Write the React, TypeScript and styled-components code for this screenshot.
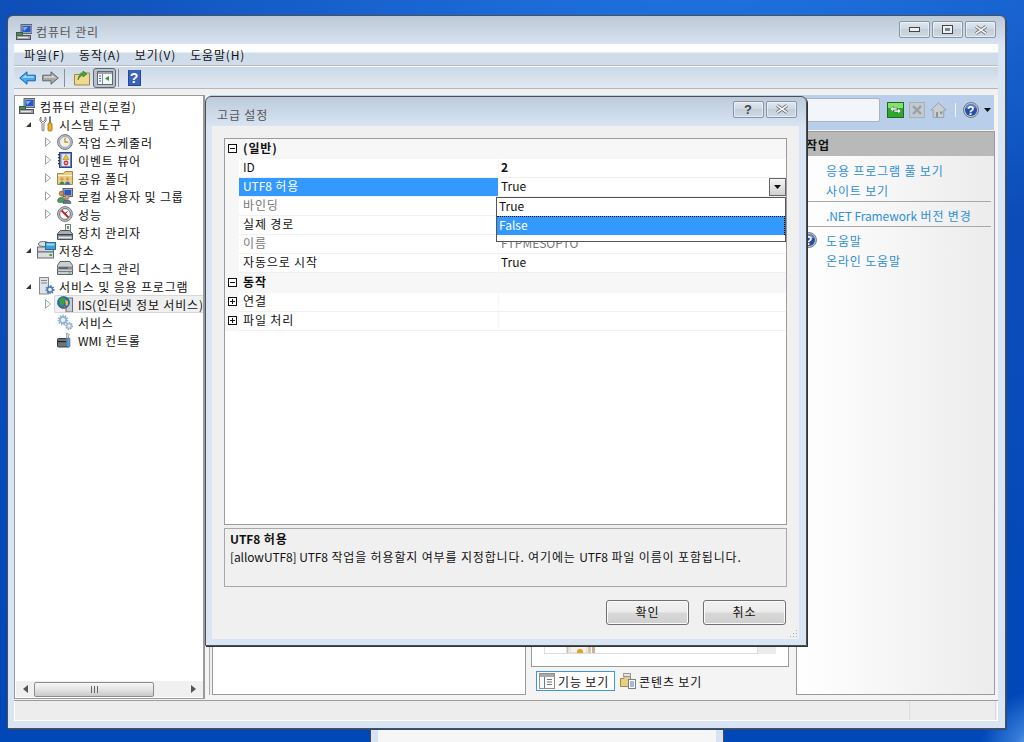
import React from "react";
import styled, { createGlobalStyle } from "styled-components";

const Global = createGlobalStyle`
  html, body { margin: 0; padding: 0; height: 100%; overflow: hidden; }
  body { font-family: "Noto Sans CJK KR", "Liberation Sans", sans-serif; font-size: 12px; color: #111; letter-spacing: .85px; }
  * { box-sizing: border-box; }
`;

const Lat = styled.span`letter-spacing: -.1px;`;

const Desktop = styled.div`
  position: relative; width: 1024px; height: 742px; overflow: hidden;
  background:
    radial-gradient(60px 60px at 1040px 750px, #9fd0f5 0%, rgba(90,160,240,.6) 40%, rgba(0,71,184,0) 100%),
    radial-gradient(700px 300px at 700px -60px, #2278e6 0%, rgba(30,112,224,0) 100%),
    linear-gradient(180deg, #0e4fb8 0%, #0b4cba 40%, #0047b8 100%);
`;
const BackWindow = styled.div`
  position: absolute; left: 370px; top: 727px; width: 354px; height: 20px;
  background: #f6f6f6; border: 1px solid #4a4a4a; border-left-width: 1px;
  box-shadow: inset 7px 0 0 #d7e3f1, inset -7px 0 0 #d7e3f1;
`;
const Win = styled.div`
  position: absolute; left: 7px; top: 15px; width: 999px; height: 714px;
  border: 1px solid #4c5056; border-radius: 6px 6px 0 0;
  background: linear-gradient(180deg, #bcc8d4 0, #d9e5f3 30px, #d9e5f3 100%);
  padding: 0 7px 7px 6px; display: flex; flex-direction: column;
  box-shadow: 1px 1px 0 #2c4a80;
`;
const TitleBar = styled.div`
  height: 28px; flex: none; display: flex; align-items: center; position: relative;
  gap: 4px; padding: 3px 0 0 2px; color: #555; font-size: 12px;
`;
const CaptionGroup = styled.div`
  margin-left: auto; display: flex; gap: 2px; padding-right: 2px; margin-top: -4px;
`;
const CaptionBtn = styled.div<{ $w?: number }>`
  width: ${p => p.$w ?? 31}px; height: 17px; border: 1px solid #8594a6; border-radius: 2px;
  background: linear-gradient(180deg, #dfe6ee 0, #cdd7e2 50%, #c2cedb 50%, #cfd9e4 100%);
  box-shadow: inset 0 0 0 1px rgba(255,255,255,.5);
  display: flex; align-items: center; justify-content: center;
  font-family: "Liberation Sans", sans-serif; font-size: 13px; font-weight: 700; color: #444;
`;
const MenuBar = styled.div`
  height: 22px; flex: none; display: flex; gap: 14px; padding: 0 10px 1px; align-items: center;
  background: linear-gradient(180deg, #fff 0, #fdfefe 8px, #d1dcea 9px, #d0dcea 100%);
  border-bottom: 1px solid #b9bec4; font-size: 12px;
`;
const ToolBar = styled.div`
  height: 23px; flex: none; display: flex; align-items: center; padding: 0 5px; gap: 6px;
  background: linear-gradient(180deg, #ccd8e7 0, #e2e9f2 100%);
  border-top: 1px solid #f4f7fa; border-bottom: 1px solid #b4b8bc;
`;
const ToolSep = styled.div<{ $ml: number }>`width: 1px; height: 18px; background: #8a8f96; margin: 0 3px 0 ${p => p.$ml}px;`;
const ToggleBtn = styled.div`
  width: 23px; height: 20px; margin-left: -3px; border: 1px solid #5f6770; border-radius: 3px; background: #b8c2cd;
  display: flex; align-items: center; justify-content: center;
`;
const TopGap = styled.div`height: 6px; flex: none; background: #f0f0f0;`;
const Client = styled.div`flex: 1; display: flex; min-height: 0; background: #f4f4f4; position: relative;`;

const TreePane = styled.div`
  width: 191px; flex: none; background: #fff; border: 1px solid #9a9a9a; border-width: 1px 2px 1px 1px; margin-bottom: 1px;
  display: flex; flex-direction: column; position: relative;
`;
const TreeList = styled.div`flex: 1; padding-top: 1px; overflow: hidden;`;
const TreeRow = styled.div<{ $indent: number }>`
  height: 18px; display: flex; align-items: center; padding-left: ${p => p.$indent}px; white-space: nowrap;
  font-size: 12px;
`;
const RowLabel = styled.span<{ $sel?: boolean; $gap: number }>`
  display: flex; align-items: center; height: 18px; gap: ${p => p.$gap}px; flex: 1; padding-left: 2px;
  ${p => p.$sel ? `background: #efefef; border: 1px solid #d8d8d8; border-right: none; border-radius: 2px 0 0 2px; margin-left: -1px;` : ""}
`;
const IconSlot = styled.span<{ $w: number }>`width: ${p => p.$w}px; flex: none; display: flex; justify-content: center;`;
const Expander = styled.span`width: 10px; flex: none; display: flex; align-items: center; justify-content: flex-start;`;
const HScroll = styled.div`
  height: 16px; margin: 0 0 1px 1px; flex: none; background: #f0f0f0; display: flex; align-items: center; position: relative;
`;
const ScrollArrow = styled.div<{ $w: number }>`width: ${p => p.$w}px; display: flex; justify-content: center; flex: none;`;
const Thumb = styled.div`
  width: 120px; height: 15px; border: 1px solid #8c8c8c; border-radius: 2px;
  background: linear-gradient(180deg, #f6f6f6 0, #e4e4e4 50%, #c9c9c9 100%);
  display: flex; align-items: center; justify-content: center;
`;
const Track = styled.div`flex: 1;`;

const Main = styled.div`flex: 1; min-width: 0; display: flex; flex-direction: column; margin-left: 5px;`;
const AddressBar = styled.div`
  height: 35px; flex: none; background: #b9cfe9; display: flex; align-items: center; margin-right: 4px; position: relative;
  padding-left: 480px;
`;
const SearchBox = styled.div`
  width: 190px; height: 24px; margin-top: -5px; background: #f2f5f9; border: 1px solid #aab4c0; border-radius: 2px; flex: none;
`;
const AddrIcons = styled.div`display: flex; align-items: center; margin-left: 7px; gap: 5px; margin-top: -5px;`;
const AddrSep = styled.div`width: 1px; height: 14px; background: #eef3f9; margin: 0 2px 0 3px;`;
const Panes = styled.div`
  flex: 1; min-height: 0; display: flex; padding: 1px 4px 5px 2px;
`;
const WhitePane = styled.div`width: 314px; flex: none; background: #fff; border: 1px solid #9a9a9a; box-shadow: -2px 0 0 #f0f0f0, -3px 0 0 #aaa;`;
const FeatureCol = styled.div`width: 258px; margin-left: 5px; flex: none; display: flex; flex-direction: column;`;
const FeatureBox = styled.div`
  height: 536px; flex: none; border: 1px solid #9a9a9a; padding: 0 12px 12px 12px; display: flex; align-items: flex-end; background: #fff;
`;
const FeatureList = styled.div`
  flex: 1; height: 30px; background: #fff; border: 1px solid #dcdcdc; border-top: none; display: flex; align-items: flex-end; padding-left: 21px;
`;
const ListScroll = styled.div`
  width: 18px; height: 30px; background: #ececec; display: flex; align-items: flex-end; justify-content: center;
  padding-bottom: 7px; font-size: 7px; color: #666;
`;
const TabRow = styled.div`display: flex; align-items: center; padding: 4px 0 0 5px; gap: 2px;`;
const Tab = styled.div<{ $active?: boolean }>`
  height: 20px; display: flex; align-items: center; gap: 3px; padding: 0 5px 0 2px; white-space: nowrap;
  border: 1px solid ${p => p.$active ? "#3d95e6" : "transparent"}; background: ${p => p.$active ? "#fff" : "transparent"};
`;
const ActionsPane = styled.div`
  margin-left: 7px; width: 199px; flex: none; border: 1px solid #9a9a9a;
  background: linear-gradient(90deg, #fff 0, #ececec 100%); display: flex; flex-direction: column;
`;
const ActionsHead = styled.div`
  height: 24px; background: #b9b9b9; font-weight: 700; display: flex; align-items: center; padding-left: 9px; font-size: 12px; margin-bottom: 4px;
`;
const ActionLink = styled.div`
  height: 20px; display: flex; align-items: center; padding-left: 29px; color: #2f8fd6; font-size: 12px; white-space: nowrap; position: relative;
`;
const ActionSep = styled.div`height: 1px; background: #a8a8a8; margin: 1px 3px 3px 9px;`;
const ActionIcon = styled.span`position: absolute; left: 4px; top: 2px; display: flex;`;
const StatusBar = styled.div`
  height: 21px; flex: none; display: flex; background: #ededed; border-top: 1px solid #9c9c9c; border-bottom: 1px solid #fff;
  padding-right: 2px; box-shadow: inset 1px 0 0 #fff, inset -1px 0 0 #fff;
`;
const StatusCell = styled.div<{ $w?: number }>`
  ${p => p.$w ? `width: ${p.$w}px; flex: none;` : "flex: 1;"} border-right: 1px solid #dcdcdc;
`;

const Dialog = styled.div`
  position: absolute; left: 205px; top: 96px; width: 602px; height: 550px; z-index: 3;
  border: 1px solid #4c5056; border-radius: 6px 6px 0 0; padding: 0 7px 6px 6px;
  background: linear-gradient(180deg, #bccadb 0, #d9e5f3 30px, #d9e5f3 100%);
  display: flex; flex-direction: column; box-shadow: 1px 1px 0 #333;
`;
const DialogTitle = styled.div`
  height: 29px; flex: none; display: flex; align-items: center; padding: 5px 0 0 5px; color: #555; font-size: 12px;
`;
const DialogCaption = styled.div`margin-left: auto; display: flex; gap: 2px; padding-right: 2px; margin-top: -10px;`;
const DialogBody = styled.div`
  flex: 1; background: #f0f0f0; padding: 12px 12px 13px; display: flex; flex-direction: column; position: relative;
`;
const Grid = styled.div`
  height: 387px; flex: none; background: #fff; border: 1px solid #9c9c9c; position: relative; overflow: hidden;
`;
const CatRow = styled.div`
  height: 20px; display: flex; align-items: center; background: #f7f7f7; font-weight: 700; font-size: 12px; padding: 0 0 2px 3px; line-height: 14px;
`;
const ExpandBox = styled.span`
  width: 9px; height: 9px; border: 1px solid #111; flex: none; position: relative; margin-right: 6px; background: #fff;
  &::before { content: ""; position: absolute; left: 1px; right: 1px; top: 3px; height: 1px; background: #111; }
`;
const PlusBox = styled(ExpandBox)`
  &::after { content: ""; position: absolute; top: 1px; bottom: 1px; left: 3px; width: 1px; background: #111; }
`;
const PropRow = styled.div`
  height: 19px; display: grid; grid-template-columns: 14px 259px 1fr; background: #f7f7f7; line-height: 14px;
`;
const PropGutter = styled.div`display: flex; align-items: center; padding: 0 0 2px 3px;`;
const PropName = styled.div<{ $sel?: boolean; $dim?: boolean }>`
  padding: 1px 0 0 4px; border-bottom: 1px solid #f0f0f0; font-size: 12px; white-space: nowrap;
  background: ${p => p.$sel ? "#3399ff" : "#fff"}; color: ${p => p.$sel ? "#fff" : p.$dim ? "#777" : "#111"};
`;
const PropValue = styled.div<{ $dim?: boolean; $bold?: boolean }>`
  padding: 1px 0 0 2px; margin-left: 1px; border-bottom: 1px solid #f0f0f0; background: #fff; position: relative;
  font-size: 12px; letter-spacing: 0; color: ${p => p.$dim ? "#777" : "#111"}; font-weight: ${p => p.$bold ? 700 : 400};
`;
const DropBtn = styled.div`
  position: absolute; right: 0; top: 0; width: 17px; height: 18px; border: 1px solid #666;
  background: linear-gradient(180deg, #f5f5f5, #d0d0d0); display: flex; align-items: center; justify-content: center;
`;
const DropList = styled.div`
  position: absolute; left: 271px; top: 58px; width: 290px; height: 45px; background: #fff; border: 1px solid #555; z-index: 2;
`;
const DropItem = styled.div<{ $sel?: boolean }>`
  height: 18px; display: flex; align-items: center; padding: 0 0 2px 2px; font-size: 12px; line-height: 14px; letter-spacing: 0;
  ${p => p.$sel ? `background: #3399ff; color: #fff; border-top: 1px dotted #111; border-right: 1px dotted #111; height: 19px;` : ""}
`;
const Desc = styled.div`
  height: 59px; flex: none; margin-top: 3px; border: 1px solid #a8a8a8; padding: 1px 5px 0; font-size: 12px; line-height: 18px; white-space: nowrap;
`;
const DescTitle = styled.div`font-weight: 700;`;
const ButtonRow = styled.div`display: flex; justify-content: flex-end; gap: 14px; margin-top: 13px; padding-right: 1px;`;
const PushBtn = styled.div`
  width: 83px; height: 25px; border: 1px solid #707070; border-radius: 3px; display: flex; align-items: center; justify-content: center;
  padding-bottom: 1px; line-height: 14px;
  background: linear-gradient(180deg, #f2f2f2 0, #ebebeb 48%, #d8d8d8 52%, #cfcfcf 100%); box-shadow: inset 0 0 0 1px #fbfbfb; font-size: 12px;
`;
const Grip = styled.div`
  position: absolute; right: 1px; bottom: 1px; width: 9px; height: 9px; display: flex;
`;

const I = ({ children, s = 16, w, h }: { children: React.ReactNode; s?: number; w?: number; h?: number }) => (
  <svg width={w ?? s} height={h ?? s} viewBox={`0 0 ${w ?? s} ${h ?? s}`} style={{ flex: "none", display: "block" }}>{children}</svg>
);

const Computer = () => (
  <I>
    <rect x="5" y="0.5" width="11" height="9" fill="#9aa7b8" stroke="#5a6674" />
    <rect x="6.5" y="2" width="8" height="6" fill="#2a55c8" />
    <path d="M7 3l5 0-4 4z" fill="#7fb2f0" />
    <rect x="0.5" y="8.5" width="6" height="3" fill="#3d9a4a" stroke="#3b5a40" />
    <rect x="0.5" y="11.5" width="14" height="4" fill="#9ea4aa" stroke="#50565c" />
    <rect x="2" y="13" width="10" height="1" fill="#e6e6e6" />
  </I>
);
const Tools = () => (
  <I>
    <path d="M3 1v3l2 2 2-2V1l1 1v3l-2 2v7a1 1 0 0 1-2 0V7L2 5V2z" fill="#eef0f2" stroke="#5e646a" strokeWidth=".8" transform="translate(-1 0)" />
    <rect x="10" y="0.5" width="2" height="7" fill="#7a7f85" />
    <rect x="9" y="7" width="4" height="8" rx="1.2" fill="#f0b418" stroke="#8a6510" strokeWidth=".8" />
  </I>
);
const Clock = () => (
  <I>
    <circle cx="8" cy="8" r="7.4" fill="#bcc3cc" stroke="#6e7680" />
    <circle cx="8" cy="8" r="5.4" fill="#f4f1e4" stroke="#8c9098" strokeWidth=".7" />
    <path d="M8 4v4.2h3.2" fill="none" stroke="#b08a2a" strokeWidth="1.2" />
  </I>
);
const EventBook = () => (
  <I>
    <rect x="2.5" y="0.5" width="12" height="15" fill="#5f86c6" stroke="#2f4a80" />
    <rect x="1" y="2" width="2" height="1.4" fill="#333" /><rect x="1" y="5" width="2" height="1.4" fill="#333" />
    <rect x="1" y="8" width="2" height="1.4" fill="#333" /><rect x="1" y="11" width="2" height="1.4" fill="#333" />
    <rect x="4.5" y="2" width="8.5" height="12" fill="#dfe8f4" />
    <path d="M9 2.5l3 5H6z" fill="#f5c21e" stroke="#9a7a10" strokeWidth=".5" />
    <circle cx="9" cy="11" r="2.4" fill="#c8322a" />
    <rect x="7.8" y="10.4" width="2.4" height="1.1" fill="#fff" />
  </I>
);
const SharedFolder = () => (
  <I>
    <path d="M.5 3.5h6l1.5-2h7.5v13H.5z" fill="#e9cf86" stroke="#a08a4e" />
    <rect x="1" y="5" width="14" height="1" fill="#fbf0c8" />
    <circle cx="5" cy="9" r="1.8" fill="#d99a5a" /><path d="M2.5 14.5c0-4 5-4 5 0z" fill="#3a8a54" />
    <circle cx="10.5" cy="9" r="1.8" fill="#d99a5a" /><path d="M8 14.5c0-4 5-4 5 0z" fill="#3b70c0" />
  </I>
);
const Users = () => (
  <I>
    <rect x="6" y="0.5" width="9.5" height="8" fill="#9aa7b8" stroke="#5a6674" />
    <rect x="7.5" y="2" width="6.5" height="5" fill="#2a55c8" />
    <circle cx="4.5" cy="5.5" r="2.4" fill="#c98a50" stroke="#6e4a28" strokeWidth=".5" />
    <path d="M.5 13c0-5 8-5 8 0l-1 1.5h-6z" fill="#4f9a58" stroke="#2f5a34" strokeWidth=".5" />
    <circle cx="10" cy="9" r="2.2" fill="#d8a070" stroke="#6e4a28" strokeWidth=".5" />
    <path d="M6 15.5c0-5 8-5 8 0z" fill="#6a7588" stroke="#3a4250" strokeWidth=".5" />
  </I>
);
const Perf = () => (
  <I>
    <circle cx="8" cy="8" r="7.4" fill="#c6ccd2" stroke="#6e7680" />
    <circle cx="8" cy="8" r="5.4" fill="#fdfdfd" stroke="#4a4f55" strokeWidth=".8" />
    <path d="M4.5 4.5l7 7" stroke="#c8201c" strokeWidth="1.8" />
    <path d="M10.5 5.5l-2.5 2" stroke="#333" strokeWidth="1" />
  </I>
);
const Device = () => (
  <I>
    <rect x="8.5" y="0.5" width="5" height="8" fill="#f2f4ea" stroke="#7a7f85" />
    <rect x="10" y="2" width="2" height="3" fill="#5aa05a" />
    <path d="M.5 9.5l3-3h9l3 3v6H.5z" fill="#a9afb6" stroke="#4e5359" />
    <rect x="0.5" y="10" width="15" height="1.4" fill="#3c4046" />
    <rect x="2" y="13" width="12" height="1" fill="#e9e9e9" />
  </I>
);
const Storage = () => (
  <I w={19} h={18}>
    <ellipse cx="6.5" cy="3" rx="5" ry="2.5" fill="#d8dde2" stroke="#666c72" />
    <rect x="0.5" y="6" width="16" height="5" fill="#cfd4da" stroke="#666c72" />
    <rect x="0.5" y="11" width="16" height="6" fill="#d9dde2" stroke="#666c72" />
    <rect x="12.5" y="13" width="2.5" height="2" fill="#44a040" />
    <rect x="8.5" y="1.5" width="10" height="7" fill="#38a0d8" stroke="#2a6a98" />
    <rect x="9.5" y="2.5" width="8" height="2" fill="#9bd6f2" />
  </I>
);
const Disk = () => (
  <I>
    <path d="M3 1.5h10l2.5 4v9H.5v-9z" fill="#c9ced3" stroke="#5d6268" />
    <rect x="0.5" y="6.5" width="15" height="3" fill="#8b9096" />
    <rect x="2" y="7.5" width="9" height="1" fill="#33383d" />
    <rect x="0.5" y="11" width="15" height="1" fill="#777c82" />
    <rect x="11.5" y="12.5" width="2" height="1" fill="#44a040" />
  </I>
);
const GearSmall = ({ x, y, r, c }: { x: number; y: number; r: number; c: string }) => (
  <g>
    <circle cx={x} cy={y} r={r} fill="none" stroke={c} strokeWidth={r * .55} strokeDasharray="1.3 1.1" />
    <circle cx={x} cy={y} r={r * .72} fill="#eaf1f8" stroke={c} strokeWidth={r * .4} />
  </g>
);
const ServerIcon = () => (
  <I w={16} h={18}>
    <rect x="0.5" y="0.5" width="9" height="16.5" fill="#dfe2e6" stroke="#848a90" />
    <rect x="2" y="3" width="6" height="1" fill="#80868c" /><rect x="2" y="5.5" width="6" height="1" fill="#80868c" />
    <GearSmall x={11} y={12.5} r={3.6} c="#4a78b0" />
  </I>
);
const IisIcon = () => (
  <I>
    <rect x="9" y="2" width="6.5" height="14" fill="#c9ced4" stroke="#6a7076" />
    <circle cx="6.5" cy="6.5" r="6" fill="#2470c8" stroke="#143c7a" strokeWidth=".6" />
    <path d="M2 4c2-3 5-3 6-2 1 2-1 3-1 5s-2 3-3 3-1-3-2-6z" fill="#3da03a" />
    <path d="M8 4l3 1 0 4-2 1z" fill="#e8c020" />
    <path d="M6 10l2 0 1 2-2 1z" fill="#d8501e" />
  </I>
);
const Gears = () => (
  <I>
    <GearSmall x={6} y={6} r={4.3} c="#8fb0d4" />
    <GearSmall x={12} y={12} r={3.2} c="#9fb4c8" />
  </I>
);
const Wmi = () => (
  <I>
    <rect x="0.5" y="6.5" width="12" height="8.5" rx="1" fill="#6e747a" stroke="#3a3e44" />
    <rect x="0.5" y="9" width="12" height="1.2" fill="#22262a" />
    <path d="M9.5 1l3 1.5L11.5 4l.5 8-1.5 3-1-3z" fill="#cfd6de" stroke="#60666c" strokeWidth=".5" />
    <rect x="10" y="6" width="3" height="9" rx="1" fill="#5aa0dc" stroke="#2a5a8a" strokeWidth=".5" />
  </I>
);
const TriOpen = () => (
  <svg width="7" height="7" style={{ display: "block" }}><path d="M6 1v5H1z" fill="#333" /></svg>
);
const TriClosed = () => (
  <svg width="6" height="10" style={{ display: "block" }}><path d="M.5.8l5 4.2-5 4.2z" fill="#fff" stroke="#9aa0a6" /></svg>
);
const BackArrow = () => (
  <I w={17} h={14}>
    <path d="M.7 7L8 .8v3.4h8.3v5.6H8v3.4z" fill="#4aa8ec" stroke="#1a62b0" />
    <path d="M3 7l4-3.2v1.5h8v1.5H7z" fill="#a8dcf8" />
  </I>
);
const ForwardArrow = () => (
  <I w={17} h={14}>
    <path d="M16.3 7L9 .8v3.4H.7v5.6H9v3.4z" fill="#a8a8a8" stroke="#666" />
    <path d="M14 7L10 3.8v1.5H2v1.5h8z" fill="#d8d8d8" />
  </I>
);
const FolderUp = () => (
  <I w={16} h={17}>
    <path d="M.5 5.5h5l1-1.5h9v12H.5z" fill="#f0d890" stroke="#a08848" />
    <path d="M4 11c0-4 2-6 5-7V2l4 3-4 3V6c-2 1-4 2-5 5z" fill="#3aa83a" stroke="#1c6a1c" strokeWidth=".5" />
  </I>
);
const ViewToggle = () => (
  <I w={16} h={14}>
    <rect x="0.5" y="0.5" width="15" height="13" fill="#f4f6f8" stroke="#5f6770" />
    <rect x="1" y="1" width="14" height="2" fill="#9aa4ae" />
    <path d="M5.5 3v10" stroke="#808890" />
    <path d="M2 5h2M2 7.5h2M2 10h2" stroke="#3a6ea8" />
    <path d="M12 5v5L8 7.5z" fill="#2f9a3a" />
  </I>
);
const HelpBook = () => (
  <I w={13} h={16}>
    <rect x="0" y="0" width="13" height="16" fill="#24479a" />
    <rect x="1" y="0" width="11" height="15" fill="#3a63c0" />
    <text x="6.5" y="13" textAnchor="middle" fontSize="14" fontWeight="700" fill="#fff" fontFamily="Liberation Sans">?</text>
  </I>
);
const HelpRound = () => (
  <I>
    <circle cx="8" cy="8" r="7.5" fill="#bfc8d4" stroke="#555" strokeWidth=".7" />
    <circle cx="8" cy="8" r="6" fill="#234fa8" />
    <path d="M3 6a5 4 0 0 1 10 0z" fill="#5f86d0" />
    <text x="8" y="12.5" textAnchor="middle" fontSize="12" fontWeight="700" fill="#fff" fontFamily="Liberation Sans">?</text>
  </I>
);
const Refresh = () => (
  <I w={17} h={16}>
    <rect x="0.5" y="0.5" width="16" height="15" fill="#2ea82a" stroke="#1f6a1c" />
    <rect x="1" y="1" width="15" height="5" fill="#86e070" />
    <path d="M3 7l3-3v2h4v2H6v2zM14 9l-3 3v-2H7V8h4V6z" fill="#fff" stroke="#1a5a18" strokeWidth=".4" />
  </I>
);
const StopIcon = () => (
  <I>
    <rect x="0.5" y="0.5" width="15" height="15" fill="#c3c9d0" stroke="#aab0b8" />
    <path d="M4 4l8 8M12 4l-8 8" stroke="#98a0a8" strokeWidth="2.4" />
  </I>
);
const HomeIcon = () => (
  <I w={17} h={16}>
    <path d="M8.5.8L.8 8h2.4v7.5h10.6V8h2.4z" fill="#c9ced4" stroke="#9aa2aa" />
    <rect x="6" y="10" width="2" height="5" fill="#8b939b" /><rect x="10" y="9.5" width="2.4" height="2.4" fill="#8b939b" />
  </I>
);
const Caret = () => <svg width="7" height="4" style={{ display: "block" }}><path d="M0 0h7L3.5 4z" fill="#111" /></svg>;
const CloseX = () => (
  <svg width="14" height="10">
    <path d="M2 1.5l10 7M12 1.5l-10 7" stroke="#555" strokeWidth="3.2" />
    <path d="M2 1.5l10 7M12 1.5l-10 7" stroke="#f2f4f6" strokeWidth="1.6" />
  </svg>
);
const ListIcon = () => (
  <I>
    <rect x="0.5" y="0.5" width="15" height="15" fill="#fbfbfb" stroke="#8f8f8f" />
    <rect x="1" y="1" width="14" height="3" fill="#a8a8a8" />
    <path d="M5.5 4v11M8 6.5h5M8 9h5M8 11.5h5" stroke="#777" />
  </I>
);
const ContentIcon = () => (
  <I>
    <path d="M.5 5.5h3l1-2h6v10H.5z" fill="#ebcf80" stroke="#a08848" />
    <rect x="3.5" y="0.5" width="7" height="3" fill="#e4e4e4" stroke="#999" />
    <rect x="8.5" y="6.5" width="7" height="9" fill="#fff" stroke="#7a8088" />
    <path d="M10 9h4M10 11h4M10 13h4" stroke="#4a7ab8" />
  </I>
);
const ListFragment = () => (
  <I w={32} h={12}>
    <rect x="0.5" y="-1" width="2" height="13" fill="#cdbfae" />
    <rect x="4" y="-1" width="17" height="13" fill="#f5f3ee" stroke="#d8d2c6" />
    <path d="M7 2h11M7 5h11" stroke="#d8d4cc" />
    <circle cx="14" cy="11" r="3" fill="#e8a020" />
    <rect x="22" y="-1" width="3" height="13" fill="#d8c4a8" /><rect x="26" y="-1" width="3" height="13" fill="#c8b498" />
  </I>
);

type Node = { indent: number; open: boolean | null; icon: React.ReactNode; label: React.ReactNode; key: string; slot: number; gap: number; sel?: boolean };
const tree: Node[] = [
  { key: "root", indent: 2, open: null, icon: <Computer />, label: "컴퓨터 관리(로컬)", slot: 16, gap: 5 },
  { key: "sys", indent: 10, open: true, icon: <Tools />, label: "시스템 도구", slot: 19, gap: 3 },
  { key: "task", indent: 30, open: false, icon: <Clock />, label: "작업 스케줄러", slot: 16, gap: 5 },
  { key: "evt", indent: 30, open: false, icon: <EventBook />, label: "이벤트 뷰어", slot: 16, gap: 5 },
  { key: "share", indent: 30, open: false, icon: <SharedFolder />, label: "공유 폴더", slot: 16, gap: 5 },
  { key: "users", indent: 30, open: false, icon: <Users />, label: "로컬 사용자 및 그룹", slot: 16, gap: 5 },
  { key: "perf", indent: 30, open: false, icon: <Perf />, label: "성능", slot: 16, gap: 5 },
  { key: "dev", indent: 40, open: null, icon: <Device />, label: "장치 관리자", slot: 16, gap: 5 },
  { key: "stor", indent: 10, open: true, icon: <Storage />, label: "저장소", slot: 19, gap: 3 },
  { key: "disk", indent: 40, open: null, icon: <Disk />, label: "디스크 관리", slot: 16, gap: 5 },
  { key: "svc", indent: 10, open: true, icon: <ServerIcon />, label: "서비스 및 응용 프로그램", slot: 19, gap: 3 },
  { key: "iis", indent: 30, open: false, icon: <IisIcon />, label: <><Lat>IIS</Lat>(인터넷 정보 서비스)</>, slot: 16, gap: 5, sel: true },
  { key: "svcs", indent: 40, open: null, icon: <Gears />, label: "서비스", slot: 16, gap: 5 },
  { key: "wmi", indent: 40, open: null, icon: <Wmi />, label: <><Lat>WMI</Lat> 컨트롤</>, slot: 16, gap: 5 },
];

const props: { k: string; n: React.ReactNode; v: string; bold?: boolean; sel?: boolean; dim?: boolean }[] = [
  { k: "id", n: <Lat>ID</Lat>, v: "2", bold: true },
  { k: "utf", n: <><Lat>UTF8</Lat> 허용</>, v: "True", sel: true },
  { k: "bind", n: "바인딩", v: "", dim: true },
  { k: "path", n: "실제 경로", v: "" },
  { k: "name", n: "이름", v: "FTPMESOPTO", dim: true },
  { k: "auto", n: "자동으로 시작", v: "True" },
];

export default function App() {
  return (
    <Desktop>
      <Global />
      <BackWindow />
      <Win>
        <TitleBar>
          <Computer />
          <span>컴퓨터 관리</span>
          <CaptionGroup>
            <CaptionBtn><svg width="11" height="6"><rect x=".5" y=".5" width="10" height="4" fill="#eef1f4" stroke="#444" /></svg></CaptionBtn>
            <CaptionBtn><svg width="11" height="9"><rect x=".5" y=".5" width="10" height="8" fill="#eef1f4" stroke="#444" /><rect x="3" y="3" width="5" height="3" fill="#7a8490" /></svg></CaptionBtn>
            <CaptionBtn><CloseX /></CaptionBtn>
          </CaptionGroup>
        </TitleBar>
        <MenuBar>
          <span>파일(F)</span><span>동작(A)</span><span>보기(V)</span><span>도움말(H)</span>
        </MenuBar>
        <ToolBar>
          <BackArrow />
          <ForwardArrow />
          <ToolSep $ml={-1} />
          <FolderUp />
          <ToggleBtn><ViewToggle /></ToggleBtn>
          <ToolSep $ml={-4} />
          <HelpBook />
        </ToolBar>
        <TopGap />
        <Client>
          <TreePane>
            <TreeList>
              {tree.map(t => (
                <TreeRow key={t.key} $indent={t.indent}>
                  {t.open !== null && <Expander>{t.open ? <TriOpen /> : <TriClosed />}</Expander>}
                  <RowLabel $sel={t.sel} $gap={t.gap}><IconSlot $w={t.slot}>{t.icon}</IconSlot><span>{t.label}</span></RowLabel>
                </TreeRow>
              ))}
            </TreeList>
            <HScroll>
              <ScrollArrow $w={18}><svg width="5" height="8"><path d="M5 0v8L0 4z" fill="#555" /></svg></ScrollArrow>
              <Thumb><svg width="9" height="7"><path d="M1.5 0v7M4.5 0v7M7.5 0v7" stroke="#666" /></svg></Thumb>
              <Track />
              <ScrollArrow $w={19}><svg width="5" height="8"><path d="M0 0v8l5-4z" fill="#555" /></svg></ScrollArrow>
            </HScroll>
          </TreePane>
          <Main>
            <AddressBar>
              <SearchBox />
              <AddrIcons>
                <Refresh />
                <StopIcon />
                <HomeIcon />
                <AddrSep />
                <HelpRound />
                <Caret />
              </AddrIcons>
            </AddressBar>
            <Panes>
              <WhitePane />
              <FeatureCol>
                <FeatureBox>
                  <FeatureList><ListFragment /></FeatureList>
                  <ListScroll>▼</ListScroll>
                </FeatureBox>
                <TabRow>
                  <Tab $active><ListIcon />기능 보기</Tab>
                  <Tab><ContentIcon />콘텐츠 보기</Tab>
                </TabRow>
              </FeatureCol>
              <ActionsPane>
                <ActionsHead>작업</ActionsHead>
                <ActionLink>응용 프로그램 풀 보기</ActionLink>
                <ActionLink>사이트 보기</ActionLink>
                <ActionSep />
                <ActionLink><Lat>.NET Framework</Lat>&nbsp;버전 변경</ActionLink>
                <ActionSep />
                <ActionLink><ActionIcon><HelpRound /></ActionIcon>도움말</ActionLink>
                <ActionLink>온라인 도움말</ActionLink>
              </ActionsPane>
            </Panes>
          </Main>
        </Client>
        <StatusBar>
          <StatusCell />
          <StatusCell $w={86} />
        </StatusBar>
      </Win>
      <Dialog>
        <DialogTitle>
          <span>고급 설정</span>
          <DialogCaption>
            <CaptionBtn>?</CaptionBtn>
            <CaptionBtn><CloseX /></CaptionBtn>
          </DialogCaption>
        </DialogTitle>
        <DialogBody>
          <Grid>
            <CatRow><ExpandBox />(일반)</CatRow>
            {props.map(p => (
              <PropRow key={p.k}>
                <PropGutter />
                <PropName $sel={p.sel} $dim={p.dim}>{p.n}</PropName>
                <PropValue $dim={p.dim} $bold={p.bold}>
                  {p.v}
                  {p.sel && <DropBtn><Caret /></DropBtn>}
                </PropValue>
              </PropRow>
            ))}
            <CatRow><ExpandBox />동작</CatRow>
            <PropRow>
              <PropGutter><PlusBox /></PropGutter>
              <PropName>연결</PropName>
              <PropValue />
            </PropRow>
            <PropRow>
              <PropGutter><PlusBox /></PropGutter>
              <PropName>파일 처리</PropName>
              <PropValue />
            </PropRow>
            <DropList>
              <DropItem>True</DropItem>
              <DropItem $sel>False</DropItem>
            </DropList>
          </Grid>
          <Desc>
            <DescTitle><Lat>UTF8</Lat> 허용</DescTitle>
            <Lat>[allowUTF8] UTF8</Lat> 작업을 허용할지 여부를 지정합니다. 여기에는 <Lat>UTF8</Lat> 파일 이름이 포함됩니다.
          </Desc>
          <ButtonRow>
            <PushBtn>확인</PushBtn>
            <PushBtn>취소</PushBtn>
          </ButtonRow>
          <Grip>
            <svg width="9" height="9">
              <path d="M7 1h1v1H7zM4 4h1v1H4zM7 4h1v1H7zM1 7h1v1H1zM4 7h1v1H4zM7 7h1v1H7z" fill="#a8a8a8" />
            </svg>
          </Grip>
        </DialogBody>
      </Dialog>
    </Desktop>
  );
}
